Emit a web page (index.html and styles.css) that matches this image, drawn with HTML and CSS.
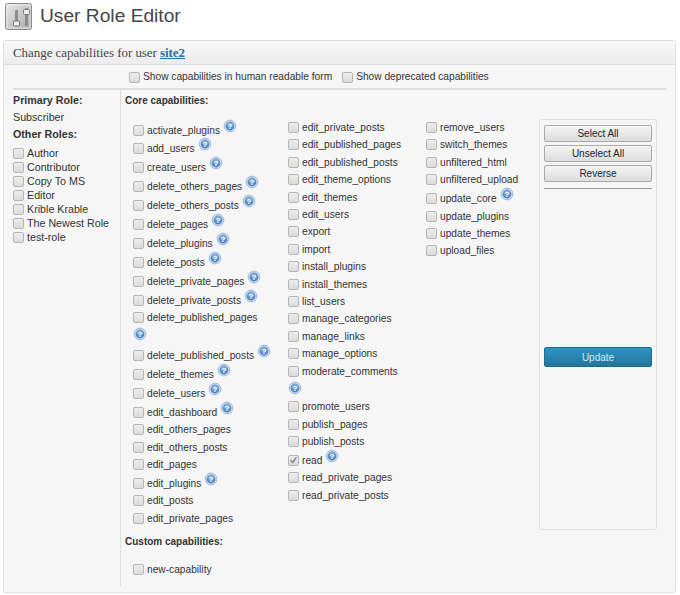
FILE: index.html
```html
<!DOCTYPE html>
<html lang="en">
<head>
<meta charset="utf-8">
<title>User Role Editor</title>
<link rel="stylesheet" href="styles.css">
</head>
<body>
<svg class="defs" width="0" height="0" aria-hidden="true">
  <defs>
    <radialGradient id="hg" cx="50%" cy="35%" r="65%"><stop offset="0" stop-color="#9cc4ea"/><stop offset="1" stop-color="#3d74b4"/></radialGradient>
    <linearGradient id="ig" x1="0" y1="0" x2="1" y2="1"><stop offset="0" stop-color="#e8e8e8"/><stop offset="1" stop-color="#a8a8a8"/></linearGradient>
    <symbol id="help" viewBox="0 0 14 14">
      <circle cx="7" cy="7" r="5.9" fill="#cfe0f2" stroke="#8fb0d6" stroke-width=".8"/>
      <circle cx="7" cy="7" r="4.4" fill="url(#hg)"/>
      <text x="7" y="10" text-anchor="middle" class="q">?</text>
    </symbol>
  </defs>
</svg>
<header class="title">
  <svg class="logo" width="27" height="27" viewBox="0 0 27 27" aria-hidden="true">
    <rect x=".5" y=".5" width="26" height="26" rx="2" fill="url(#ig)" stroke="#8a8a8a"/>
    <rect x="2" y="2" width="23" height="23" fill="none" stroke="#f2f2f2" stroke-width=".8"/>
    <rect x="10" y="7" width="3" height="15" rx="1" fill="#8a8a8a"/>
    <rect x="8.500" y="18" width="6" height="5" rx="1" fill="#eee" stroke="#777"/>
    <rect x="20" y="5" width="3" height="18" rx="1" fill="#8a8a8a"/>
    <rect x="18.500" y="6.500" width="6" height="5" rx="1" fill="#eee" stroke="#777"/>
  </svg>
  <h1>User Role Editor</h1>
</header>
<section class="box">
  <h2 class="box-head">Change capabilities for user <a href="#">site2</a></h2>
  <div class="box-body">
    <div class="opts">
      <label class="opt"><input type="checkbox">Show capabilities in human readable form</label>
      <label class="opt"><input type="checkbox">Show deprecated capabilities</label>
    </div>
    <div class="main">
      <aside class="roles">
        <h3>Primary Role:</h3>
        <p class="primary">Subscriber</p>
        <h3>Other Roles:</h3>
        <ul>
          <li><label><input type="checkbox">Author</label></li>
          <li><label><input type="checkbox">Contributor</label></li>
          <li><label><input type="checkbox">Copy To MS</label></li>
          <li><label><input type="checkbox">Editor</label></li>
          <li><label><input type="checkbox">Krible Krable</label></li>
          <li><label><input type="checkbox">The Newest Role</label></li>
          <li><label><input type="checkbox">test-role</label></li>
        </ul>
      </aside>
      <div class="caps">
        <h3>Core capabilities:</h3>
        <div class="core">
          <div class="col c1">
            <div class="cap"><label><input type="checkbox">activate_plugins</label><svg class="h"><use href="#help"/></svg></div>
            <div class="cap"><label><input type="checkbox">add_users</label><svg class="h"><use href="#help"/></svg></div>
            <div class="cap"><label><input type="checkbox">create_users</label><svg class="h"><use href="#help"/></svg></div>
            <div class="cap"><label><input type="checkbox">delete_others_pages</label><svg class="h"><use href="#help"/></svg></div>
            <div class="cap"><label><input type="checkbox">delete_others_posts</label><svg class="h"><use href="#help"/></svg></div>
            <div class="cap"><label><input type="checkbox">delete_pages</label><svg class="h"><use href="#help"/></svg></div>
            <div class="cap"><label><input type="checkbox">delete_plugins</label><svg class="h"><use href="#help"/></svg></div>
            <div class="cap"><label><input type="checkbox">delete_posts</label><svg class="h"><use href="#help"/></svg></div>
            <div class="cap"><label><input type="checkbox">delete_private_pages</label><svg class="h"><use href="#help"/></svg></div>
            <div class="cap"><label><input type="checkbox">delete_private_posts</label><svg class="h"><use href="#help"/></svg></div>
            <div class="cap wrapped wide"><label><input type="checkbox">delete_published_pages</label><svg class="h"><use href="#help"/></svg></div>
            <div class="cap"><label><input type="checkbox">delete_published_posts</label><svg class="h"><use href="#help"/></svg></div>
            <div class="cap"><label><input type="checkbox">delete_themes</label><svg class="h"><use href="#help"/></svg></div>
            <div class="cap"><label><input type="checkbox">delete_users</label><svg class="h"><use href="#help"/></svg></div>
            <div class="cap"><label><input type="checkbox">edit_dashboard</label><svg class="h"><use href="#help"/></svg></div>
            <div class="cap"><label><input type="checkbox">edit_others_pages</label></div>
            <div class="cap"><label><input type="checkbox">edit_others_posts</label></div>
            <div class="cap"><label><input type="checkbox">edit_pages</label></div>
            <div class="cap"><label><input type="checkbox">edit_plugins</label><svg class="h"><use href="#help"/></svg></div>
            <div class="cap"><label><input type="checkbox">edit_posts</label></div>
            <div class="cap"><label><input type="checkbox">edit_private_pages</label></div>
          </div>
          <div class="col c2">
            <div class="cap"><label><input type="checkbox">edit_private_posts</label></div>
            <div class="cap"><label><input type="checkbox">edit_published_pages</label></div>
            <div class="cap"><label><input type="checkbox">edit_published_posts</label></div>
            <div class="cap"><label><input type="checkbox">edit_theme_options</label></div>
            <div class="cap"><label><input type="checkbox">edit_themes</label></div>
            <div class="cap"><label><input type="checkbox">edit_users</label></div>
            <div class="cap"><label><input type="checkbox">export</label></div>
            <div class="cap"><label><input type="checkbox">import</label></div>
            <div class="cap"><label><input type="checkbox">install_plugins</label></div>
            <div class="cap"><label><input type="checkbox">install_themes</label></div>
            <div class="cap"><label><input type="checkbox">list_users</label></div>
            <div class="cap"><label><input type="checkbox">manage_categories</label></div>
            <div class="cap"><label><input type="checkbox">manage_links</label></div>
            <div class="cap"><label><input type="checkbox">manage_options</label></div>
            <div class="cap wrapped"><label><input type="checkbox">moderate_comments</label><svg class="h"><use href="#help"/></svg></div>
            <div class="cap"><label><input type="checkbox">promote_users</label></div>
            <div class="cap"><label><input type="checkbox">publish_pages</label></div>
            <div class="cap"><label><input type="checkbox">publish_posts</label></div>
            <div class="cap"><label><input type="checkbox" checked disabled>read</label><svg class="h"><use href="#help"/></svg></div>
            <div class="cap"><label><input type="checkbox">read_private_pages</label></div>
            <div class="cap"><label><input type="checkbox">read_private_posts</label></div>
          </div>
          <div class="col c3">
            <div class="cap"><label><input type="checkbox">remove_users</label></div>
            <div class="cap"><label><input type="checkbox">switch_themes</label></div>
            <div class="cap"><label><input type="checkbox">unfiltered_html</label></div>
            <div class="cap"><label><input type="checkbox">unfiltered_upload</label></div>
            <div class="cap"><label><input type="checkbox">update_core</label><svg class="h"><use href="#help"/></svg></div>
            <div class="cap"><label><input type="checkbox">update_plugins</label></div>
            <div class="cap"><label><input type="checkbox">update_themes</label></div>
            <div class="cap"><label><input type="checkbox">upload_files</label></div>
          </div>
          <div class="actions">
            <button type="button" class="btn">Select All</button>
            <button type="button" class="btn">Unselect All</button>
            <button type="button" class="btn">Reverse</button>
            <hr>
            <button type="button" class="btn primary-btn">Update</button>
          </div>
        </div>
        <h3 class="custom-h">Custom capabilities:</h3>
        <div class="cap custom"><label><input type="checkbox">new-capability</label></div>
      </div>
    </div>
  </div>
</section>
</body>
</html>
```
FILE: styles.css
```css
* { box-sizing: border-box; }
html, body { margin: 0; padding: 0; background: #fff; }
body { width: 680px; height: 595px; overflow: hidden; font: 10.2px/17.4px "Liberation Sans", Arial, sans-serif; color: #333; }
.defs { position: absolute; }
.q { font: bold 8px "Liberation Sans", Arial, sans-serif; fill: #fff; }

.title { display: flex; align-items: flex-start; gap: 8px; height: 40px; padding: 3px 0 0 5px; }
.logo { display: block; flex: none; }
.title h1 { margin: 0; font-weight: 400; font-size: 19.2px; line-height: 26px; color: #464646; }

.box { margin: 0 4px 0 3px; height: 553px; border: 1px solid #dfdfdf; border-radius: 3px; background: #f6f6f6; }
.box-head { margin: 0; height: 24px; padding: 0 9px; font: 400 13px/24px "Liberation Serif", serif; letter-spacing: -.06px; color: #464646; background: linear-gradient(#f9f9f9, #ececec); border-bottom: 1px solid #dfdfdf; }
.box-head a { color: #21759b; font-weight: 700; }

.box-body { padding: 0 9px; }
.opts { display: flex; padding: 1px 0 0 116px; gap: 10px; height: 25px; align-items: center; border-bottom: 2px solid #dfdfdf; }
.opt { display: flex; align-items: center; }

input[type=checkbox] { appearance: none; position: relative; display: inline-block; width: 11px; height: 11px; margin: 0 3px 0 0; flex: none; vertical-align: -2px; border: 1px solid #b5b5b5; border-radius: 2px; background: linear-gradient(#ececec, #dcdcdc); }
input[type=checkbox]:checked::before { content: ""; position: absolute; left: 1px; top: 1px; width: 7px; height: 7px; background: #8a8a8a; clip-path: polygon(0 55%, 18% 40%, 38% 62%, 85% 0, 100% 15%, 40% 100%); }

h3 { margin: 0; font-size: 10px; font-weight: 700; color: #333; }

.main { display: flex; height: 496px; }
.roles { width: 108px; flex: none; border-right: 1px solid #dfdfdf; padding-top: 2px; font-size: 10.7px; }
.roles h3 { line-height: 17px; font-size: 10.7px; }
.primary { margin: 0; line-height: 17px; }
.roles ul { margin: 3px 0 0; padding: 0; list-style: none; }
.roles li { line-height: 14px; }

.caps { flex: 1; padding: 2px 0 0 4px; }
.caps h3 { line-height: 17px; }
.core { display: flex; margin-top: 10px; height: 411px; }
.col { padding-left: 8px; flex: none; }
.c1 { width: 163px; padding-top: 1px; }
.c2 { width: 138px; padding-left: 0; }
.c3 { width: 113px; padding-left: 0; }
.cap { min-height: 17.4px; }
.cap label { white-space: nowrap; }
.cap .h { width: 14px; height: 14px; margin: -1.5px 0 0 3px; vertical-align: 1px; }
.cap.wrapped .h { display: block; margin: 1px 0 3px 0; }
.cap.wide .h { margin-bottom: 4.2px; }

.actions { flex: none; width: 118px; height: 411px; padding: 5px 4px; border: 1px solid #dfdfdf; border-radius: 3px; display: flex; flex-direction: column; }
.btn { display: block; width: 108px; height: 17px; padding: 0; margin: 0 0 3px; font: 10px/15px "Liberation Sans", Arial, sans-serif; color: #222; background: linear-gradient(#f5f5f5, #dcdcdc); border: 1px solid #aaa; border-radius: 2px; }
.actions hr { width: 108px; height: 0; margin: 3px 0 158px; border: 0; border-top: 1px solid #999; }
.primary-btn { height: 20px; color: #d5ecf7; background: linear-gradient(#2e95c3, #21759b); border-color: #1f6a8c; }

.custom-h { margin-top: 3px; }
.custom { margin: 11px 0 0 8px; }
```
